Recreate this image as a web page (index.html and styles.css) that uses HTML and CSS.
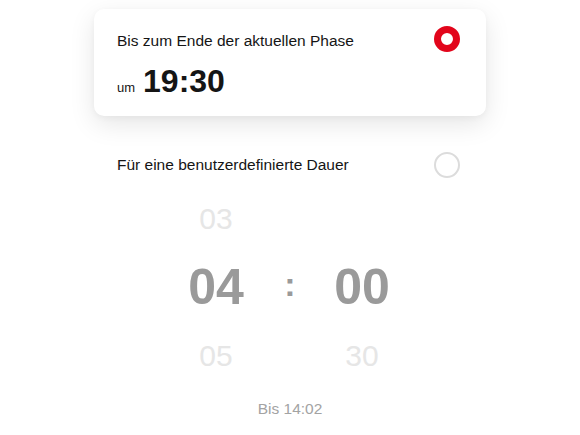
FILE: index.html
```html
<!DOCTYPE html>
<html lang="de">
<head>
  <meta charset="UTF-8" />
  <title>Dauer wählen</title>
  <link rel="stylesheet" href="styles.css">
</head>
<body>
  <div id="duration">
    <div class="option option-card">
      <div class="option-head">
        <span class="option-label">Bis zum Ende der aktuellen Phase</span>
        <span class="radio checked"></span>
      </div>
      <div class="option-time">
        <span class="time-prefix">um</span>
        <span class="time-value">19:30</span>
      </div>
    </div>

    <div class="option option-row">
      <span class="option-label">Für eine benutzerdefinierte Dauer</span>
      <span class="radio"></span>
    </div>
  </div>

  <div id="picker">
    <div class="cell faded">03</div>
    <div class="cell"></div>
    <div class="cell"></div>

    <div class="cell current">04</div>
    <div class="cell sep">:</div>
    <div class="cell current">00</div>

    <div class="cell faded">05</div>
    <div class="cell"></div>
    <div class="cell faded">30</div>
  </div>

  <p class="until">Bis 14:02</p>
</body>
</html>
```

FILE: styles.css
```css
:root {
  --text: #151515;
  --red: #e2051b;
  --radio-off: #dcdcdc;
  --digit: #9a9a9a;
  --digit-faded: #e6e6e6;
  --muted: #a3a3a3;
}

* {
  box-sizing: border-box;
  margin: 0;
  padding: 0;
}

body {
  font-family: "Liberation Sans", Arial, sans-serif;
  background: #fff;
  color: var(--text);
  width: 580px;
}

#duration {
  width: 392px;
  margin: 0 auto;
  padding-top: 9px;
}

.option-label {
  font-size: 15.5px;
  line-height: 20px;
}

.radio {
  flex: 0 0 26px;
  width: 26px;
  height: 26px;
  border-radius: 50%;
  border: 2px solid var(--radio-off);
}

.radio.checked {
  border: 7px solid var(--red);
}

/* selected option */
.option-card {
  height: 107px;
  padding: 17px 26px 0 23px;
  background: #fff;
  border-radius: 10px;
  box-shadow: 0 8px 26px rgba(0, 0, 0, 0.1), 0 2px 6px rgba(0, 0, 0, 0.04);
}

.option-head {
  display: flex;
  justify-content: space-between;
  align-items: flex-start;
}

.option-head .option-label {
  margin-top: 5px;
}

.option-time {
  display: flex;
  align-items: baseline;
  gap: 8px;
  margin-top: 13px;
}

.time-prefix {
  font-size: 13px;
}

.time-value {
  font-size: 32px;
  line-height: 32px;
  font-weight: bold;
}

/* custom duration option */
.option-row {
  display: flex;
  justify-content: space-between;
  align-items: center;
  margin-top: 36px;
  padding: 0 26px 0 23px;
}

/* hour / minute wheel */
#picker {
  display: grid;
  grid-template-columns: 80px 68px 76px;
  grid-template-rows: 68px 68px 70px;
  margin: 7px 0 0 176px;
  width: 224px;
}

.cell {
  display: flex;
  justify-content: center;
  align-items: center;
}

.faded {
  font-size: 30px;
  color: var(--digit-faded);
}

.current {
  font-size: 50px;
  font-weight: bold;
  color: var(--digit);
}

.sep {
  font-size: 34px;
  font-weight: bold;
  color: var(--digit);
  padding-bottom: 6px;
}

.until {
  margin-top: 8px;
  text-align: center;
  font-size: 15.5px;
  line-height: 20px;
  color: var(--muted);
}
```
